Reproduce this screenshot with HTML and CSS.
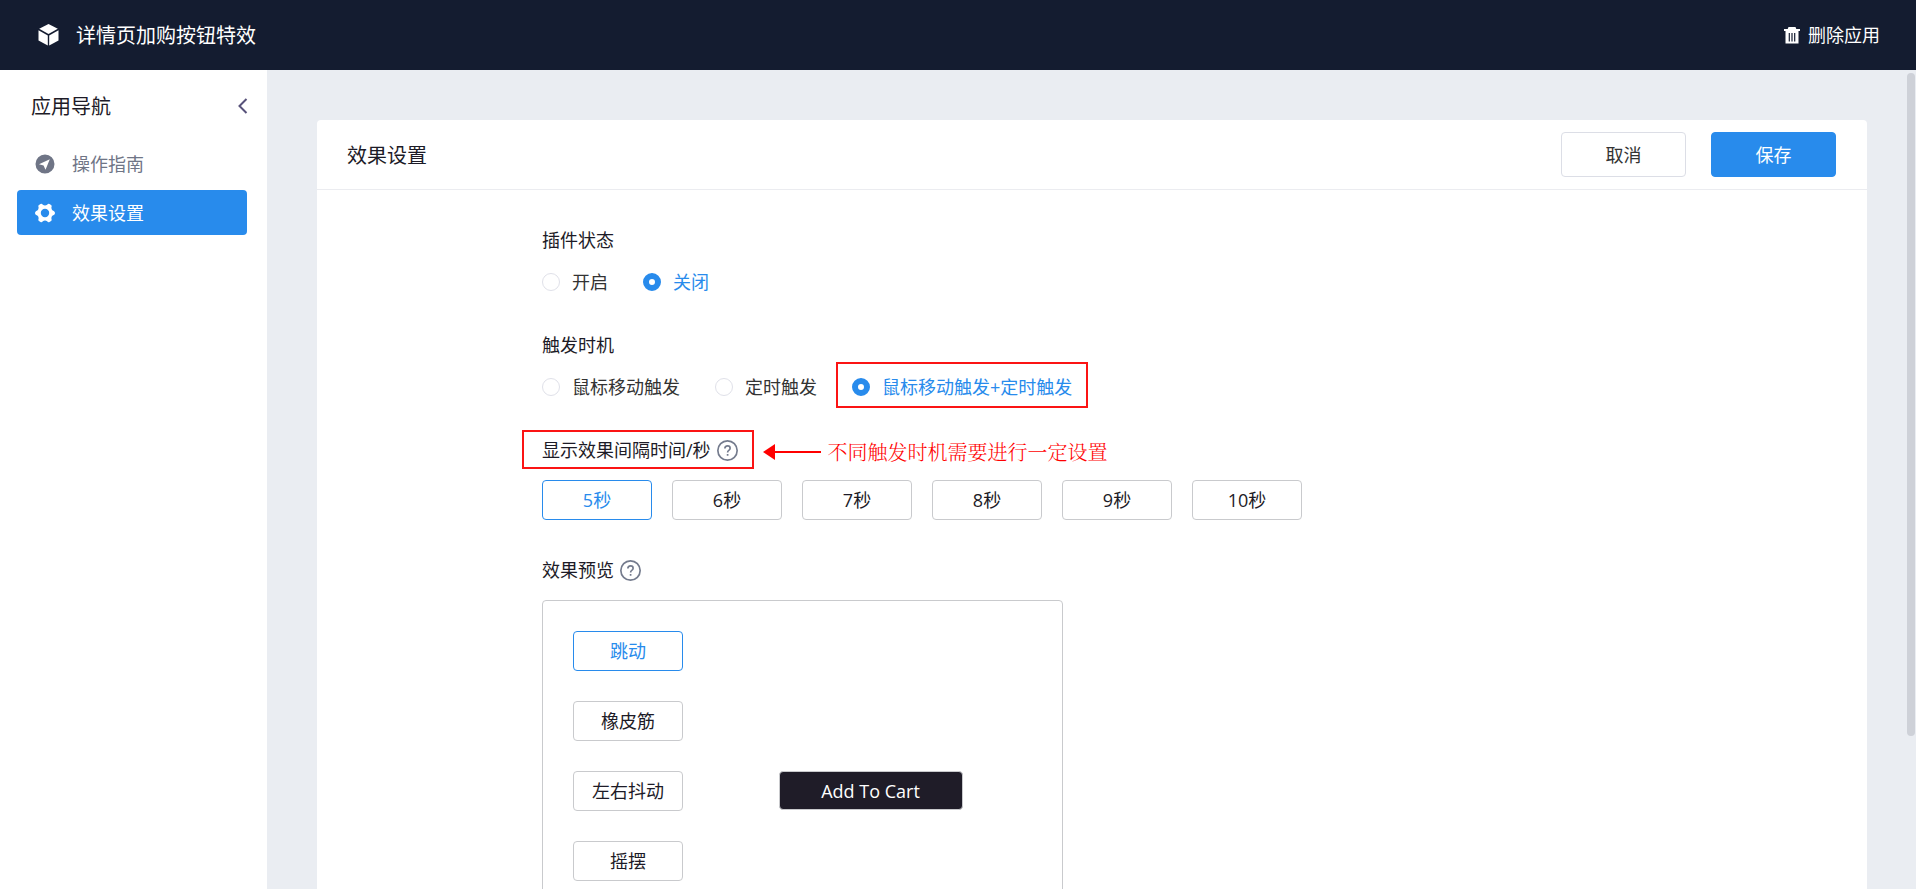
FILE: index.html
```html
<!DOCTYPE html>
<html lang="zh-CN">
<head>
<meta charset="utf-8">
<title>详情页加购按钮特效</title>
<link rel="stylesheet" href="styles.css">
</head>
<body>
<header class="topbar">
  <div class="brand">
    <svg class="brand-icon" viewBox="0 0 20 22" aria-hidden="true">
      <path d="M10 0 19.3 4.8 10 10.1.7 4.8z"/>
      <path d="M0 6.2 9.3 11.5V21.6L0 16.4z"/>
      <path d="M20 6.2 10.7 11.5V21.6L20 16.4z"/>
    </svg>
    <h1 class="brand-name">详情页加购按钮特效</h1>
  </div>
  <button class="delete-app" type="button">
    <svg class="trash-icon" viewBox="0 0 16 17" aria-hidden="true">
      <path fill-rule="evenodd" d="M4.500 0h7l.8 2H16v2h-1.500v12.500h-13V4H0V2h3.700zM4.700 6v8.500h1.200V6zM7.400 6v8.500h1.200V6zM10.100 6v8.500h1.200V6z"/>
    </svg>
    删除应用
  </button>
</header>
<div class="layout">
  <aside class="sidebar">
    <div class="sidebar-head">
      <h2 class="sidebar-title">应用导航</h2>
      <button class="collapse" type="button" aria-label="收起">
        <svg class="chevron" viewBox="0 0 10 16" aria-hidden="true"><path d="M9 1 2 8l7 7"/></svg>
      </button>
    </div>
    <nav class="nav">
      <a class="nav-item" href="#guide">
        <svg class="nav-icon" viewBox="0 0 20 20" aria-hidden="true">
          <path fill-rule="evenodd" d="M10 .5a9.500 9.500 0 1 1 0 19 9.500 9.500 0 0 1 0-19zM14.800 5.200 4 10.200l4.600 1.200 1.900 4.400z"/>
        </svg>
        操作指南
      </a>
      <a class="nav-item active" href="#effect">
        <svg class="nav-icon" viewBox="0 0 20 20" aria-hidden="true">
          <path fill-rule="evenodd" d="M5.500 1Q7 .4 7.800 1.700 10 3.300 12.200 1.700 13 .4 14.500 1L16.400 2.200Q17 3.300 16.400 4.300 16.300 7.300 18.800 7.900 20 8.600 20 10 20 11.400 18.800 12.100 16.300 12.700 16.400 15.700 17 16.700 16.400 17.800L14.500 19Q13 19.600 12.200 18.300 10 16.700 7.800 18.300 7 19.600 5.500 19L3.600 17.800Q3 16.700 3.600 15.700 3.700 12.700 1.200 12.100 0 11.400 0 10 0 8.600 1.200 7.900 3.700 7.300 3.600 4.300 3 3.300 3.600 2.200zM10 5.800a4.200 4.200 0 1 0 0 8.400 4.200 4.200 0 0 0 0-8.400z"/>
        </svg>
        效果设置
      </a>
    </nav>
  </aside>
  <main class="main">
    <section class="card">
      <div class="card-head">
        <h2 class="card-title">效果设置</h2>
        <div class="actions">
          <button class="btn" type="button">取消</button>
          <button class="btn primary" type="submit" form="settings">保存</button>
        </div>
      </div>
      <form class="form" id="settings">
        <fieldset class="group">
          <legend class="label">插件状态</legend>
          <div class="radios">
            <label class="radio"><input type="radio" name="status">开启</label>
            <label class="radio"><input type="radio" name="status" checked>关闭</label>
          </div>
        </fieldset>
        <fieldset class="group">
          <legend class="label">触发时机</legend>
          <div class="radios">
            <label class="radio"><input type="radio" name="trigger">鼠标移动触发</label>
            <label class="radio"><input type="radio" name="trigger">定时触发</label>
            <label class="radio marked"><input type="radio" name="trigger" checked>鼠标移动触发+定时触发</label>
          </div>
        </fieldset>
        <div class="group interval">
          <div class="label marked">
            显示效果间隔时间/秒
            <svg class="help" viewBox="0 0 20 20" role="img" aria-label="帮助"><circle cx="10" cy="10" r="9.200"/><path d="M7.500 8.200Q7.500 5.600 10.100 5.600 12.500 5.600 12.500 7.800 12.500 9 11.200 9.900 10.100 10.600 10.100 11.800M10.100 13.300v1.700"/></svg>
            <div class="note">
              <svg class="arrow" viewBox="0 0 58 16" aria-hidden="true"><path d="M0 8 12 0v16z"/><path d="M10 7h48v2H10z"/></svg>
              不同触发时机需要进行一定设置
            </div>
          </div>
          <div class="options">
            <button class="option selected" type="button">5秒</button>
            <button class="option" type="button">6秒</button>
            <button class="option" type="button">7秒</button>
            <button class="option" type="button">8秒</button>
            <button class="option" type="button">9秒</button>
            <button class="option" type="button">10秒</button>
          </div>
        </div>
        <div class="group preview-group">
          <div class="label">
            效果预览
            <svg class="help" viewBox="0 0 20 20" role="img" aria-label="帮助"><circle cx="10" cy="10" r="9.200"/><path d="M7.500 8.200Q7.500 5.600 10.100 5.600 12.500 5.600 12.500 7.800 12.500 9 11.200 9.900 10.100 10.600 10.100 11.800M10.100 13.300v1.700"/></svg>
          </div>
          <div class="preview">
            <div class="effects">
              <button class="option selected" type="button">跳动</button>
              <button class="option" type="button">橡皮筋</button>
              <button class="option" type="button">左右抖动</button>
              <button class="option" type="button">摇摆</button>
            </div>
            <div class="stage">
              <button class="cart" type="button">Add To Cart</button>
            </div>
          </div>
        </div>
      </form>
    </section>
    <div class="scroll-thumb"></div>
  </main>
</div>
</body>
</html>
```

FILE: styles.css
```css
* {
  box-sizing: border-box;
}

body {
  margin: 0;
  height: 100vh;
  display: flex;
  flex-direction: column;
  overflow: hidden;
  font: 18px/26px "Open Sans", "Noto Sans CJK SC", sans-serif;
  font-weight: 400;
  color: #1d1b27;
}

h1,
h2 {
  margin: 0;
  padding-top: 2px;
  font-size: 20px;
  font-weight: 400;
}

button {
  font: inherit;
  color: inherit;
  padding: 0;
  border: 0;
  background: none;
  cursor: pointer;
}

svg {
  flex: none;
}

.topbar {
  flex: none;
  height: 70px;
  padding: 0 36px 0 38px;
  display: flex;
  align-items: center;
  justify-content: space-between;
  background: #141c30;
  color: #fff;
}

.brand {
  display: flex;
  align-items: center;
  gap: 17px;
}

.brand-icon {
  width: 21px;
  height: 22px;
  fill: #fff;
}

.delete-app {
  display: flex;
  align-items: center;
  gap: 8px;
}

.trash-icon {
  width: 16px;
  height: 17px;
  fill: #fff;
}

.layout {
  flex: 1;
  min-height: 0;
  display: flex;
}

.sidebar {
  flex: none;
  width: 267px;
  background: #fff;
}

.sidebar-head {
  height: 71px;
  padding: 0 19px 0 31px;
  display: flex;
  align-items: center;
  justify-content: space-between;
}

.collapse {
  display: flex;
}

.chevron {
  width: 11px;
  height: 16px;
  fill: none;
  stroke: #57527a;
  stroke-width: 2;
}

.nav {
  display: flex;
  flex-direction: column;
  gap: 4px;
  padding: 0 20px 0 17px;
}

.nav-item {
  height: 45px;
  padding: 0 18px;
  display: flex;
  align-items: center;
  gap: 17px;
  border-radius: 4px;
  color: #6f7586;
  text-decoration: none;
}

.nav-item.active {
  background: #288bec;
  color: #fff;
}

.nav-icon {
  width: 20px;
  height: 20px;
  fill: currentColor;
}

.main {
  position: relative;
  flex: 1;
  min-width: 0;
  padding: 50px 49px 0 50px;
  overflow: hidden;
  background: #eaedf2;
}

.card {
  border-radius: 4px;
  background: #fff;
}

.card-head {
  height: 70px;
  padding: 0 31px 0 30px;
  display: flex;
  align-items: center;
  justify-content: space-between;
  border-bottom: 1px solid #ebecf0;
}

.actions {
  display: flex;
  gap: 25px;
}

.btn {
  width: 125px;
  height: 45px;
  border: 1px solid #dcdee6;
  border-radius: 4px;
  color: #333;
}

.btn.primary {
  border-color: #288bec;
  background: #288bec;
  color: #fff;
}

.form {
  padding: 37px 225px 40px;
}

.group {
  margin: 0 0 37px;
  padding: 0;
  border: 0;
}

.label {
  width: fit-content;
  padding: 0;
  display: flex;
  align-items: center;
  gap: 6px;
}

.radios {
  padding-top: 16px;
  display: flex;
  gap: 35px;
}

.radio {
  display: flex;
  align-items: center;
  gap: 12px;
  color: #333;
}

.radio input {
  appearance: none;
  width: 18px;
  height: 18px;
  margin: 0;
  border: 1px solid #e0e1e9;
  border-radius: 50%;
  background: #fff;
}

.radio input:checked {
  border: 6px solid #288bec;
}

.radio:has(:checked) {
  color: #288bec;
}

/* Red call-out frames and the note beside them */
.marked {
  position: relative;
}

.marked::before {
  content: "";
  position: absolute;
  inset: -12px -16px -8px;
  border: 2px solid #fb1414;
}

.interval .marked::before {
  inset: -7px -16px -6px -20px;
}

.note {
  position: absolute;
  left: 100%;
  margin: 3px 0 0 25px;
  display: flex;
  align-items: center;
  gap: 7px;
  white-space: nowrap;
  font-family: "Noto Serif CJK SC", "Noto Sans CJK SC", serif;
  font-size: 20px;
  font-weight: 300;
  color: #f00;
}

.arrow {
  width: 58px;
  height: 16px;
  fill: #f00;
}

.help {
  width: 21px;
  height: 21px;
  fill: none;
  stroke: #747b8d;
  stroke-width: 1.600;
}

.options {
  padding-top: 17px;
  display: flex;
  gap: 20px;
}

.option {
  width: 110px;
  height: 40px;
  border: 1px solid #c9cacd;
  border-radius: 4px;
  background: #fff;
}

.option.selected {
  border-color: #288bec;
  color: #288bec;
}

.preview {
  max-width: 521px;
  margin-top: 17px;
  padding: 30px;
  display: flex;
  border: 1px solid #c9cacd;
  border-radius: 4px;
}

.effects {
  display: flex;
  flex-direction: column;
  gap: 30px;
}

.stage {
  flex: 1;
  display: flex;
  justify-content: center;
  padding: 140px 0 0 26px;
}

.cart {
  width: 184px;
  height: 39px;
  border: 1px solid #c9cacd;
  border-radius: 4px;
  background: #1f1c28;
  color: #fff;
}

.scroll-thumb {
  position: absolute;
  top: 3px;
  right: 1px;
  width: 8px;
  height: 81%;
  border-radius: 4px;
  background: #ced1d8;
}
```
